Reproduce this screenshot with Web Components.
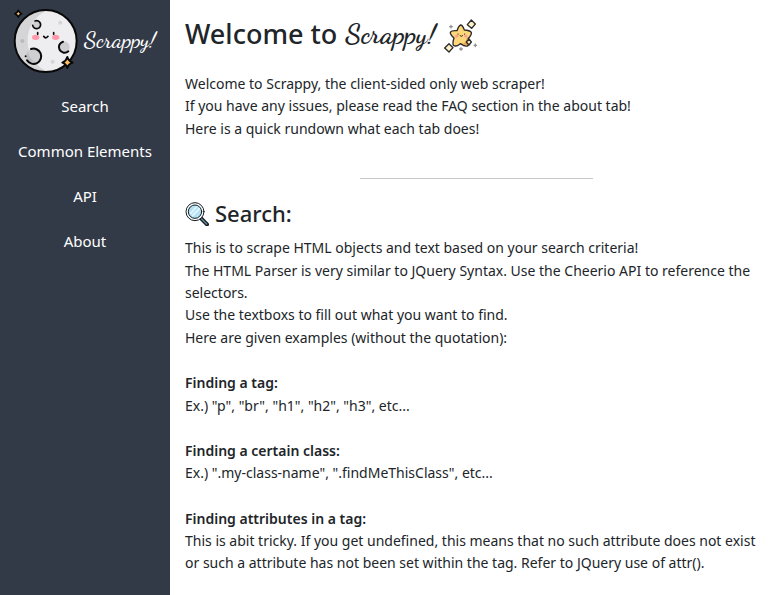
<!DOCTYPE html>
<html lang="en">
<head>
<meta charset="utf-8">
<title>Scrappy!</title>
<style>
  body { margin: 0; background: #fff; color: #212529; font: 14px/1.6 "Noto Sans", "Open Sans", sans-serif; }
</style>
</head>
<body>
<scrappy-app>
  <scrappy-sidebar slot="side"></scrappy-sidebar>
  <page-title>Welcome to</page-title>
  <text-block>
    Welcome to Scrappy, the client-sided only web scraper!<br>
    If you have any issues, please read the FAQ section in the about tab!<br>
    Here is a quick rundown what each tab does!
  </text-block>
  <section-rule></section-rule>
  <section-title>Search:</section-title>
  <text-block>
    This is to scrape HTML objects and text based on your search criteria!<br>
    The HTML Parser is very similar to JQuery Syntax. Use the Cheerio API to reference the selectors.<br>
    Use the textboxs to fill out what you want to find.<br>
    Here are given examples (without the quotation):
  </text-block>
  <text-block><span slot="heading">Finding a tag:</span>Ex.) "p", "br", "h1", "h2", "h3", etc...</text-block>
  <text-block><span slot="heading">Finding a certain class:</span>Ex.) ".my-class-name", ".findMeThisClass", etc...</text-block>
  <text-block><span slot="heading">Finding attributes in a tag:</span>This is abit tricky. If you get undefined, this means that no such attribute does not exist or such a attribute has not been set within the tag. Refer to JQuery use of attr().</text-block>
</scrappy-app>

<script>
const define = (name, html) => customElements.define(name, class extends HTMLElement {
  constructor() {
    super();
    this.attachShadow({ mode: "open" }).innerHTML = html;
  }
});

define("scrappy-app", `
  <style>
    :host { display: grid; grid-template-columns: 170px minmax(0, 1fr); min-height: 100vh; }
    main { padding: 12px 15px 0; }
  </style>
  <slot name="side"></slot>
  <main><slot></slot></main>`);

define("script-name", `
  <style>
    :host { display: inline-block; font-family: "Dancing Script", "Liberation Serif", serif; }
  </style>
  <slot></slot>`);

define("moon-icon", `
  <style>:host { display: block; flex: none; } svg { display: block; }</style>
  <svg width="66" height="66" viewBox="40 24 198 198" fill="none" stroke-linecap="round" aria-hidden="true">
    <circle cx="138" cy="123" r="93" fill="#eeedef"/>
    <path d="M143 30A93 93 0 0 0 45 123A93 93 0 0 0 143 216C101 194 84 161 84 123S101 51 143 30Z" fill="#d5d5d8"/>
    <circle cx="138" cy="123" r="93" stroke="#080808" stroke-width="6"/>
    <circle cx="182" cy="68" r="6" fill="#d5d5d8"/>
    <circle cx="68" cy="123" r="6" fill="#b9babd"/>
    <circle cx="159" cy="185" r="6" fill="#d5d5d8"/>
    <circle cx="102" cy="168" r="22" fill="#bcbdc0"/>
    <path d="M84 150C86 169 96 182 112 188A24 24 0 0 0 118 153Z" fill="#cfcfd2"/>
    <path d="M94 147A23 23 0 1 1 82 181M78 169V169" stroke="#080808" stroke-width="6"/>
    <circle cx="193" cy="141" r="17" fill="#cfcfd2"/>
    <path d="M190 125A17 17 0 1 0 206 154" stroke="#080808" stroke-width="6"/>
    <circle cx="111" cy="73" r="11" fill="#cfcfd2"/>
    <path d="M106 63A12 12 0 1 1 99 76" stroke="#080808" stroke-width="5"/>
    <ellipse cx="108" cy="112" rx="11" ry="8" fill="#ff99ac"/>
    <ellipse cx="168" cy="112" rx="11" ry="8" fill="#ff99ac"/>
    <path d="M114 98V103M162 98V103M132 109Q138 118 145 109" stroke="#080808" stroke-width="5"/>
    <path d="M56 31Q58 38 66 41Q58 44 56 51Q53 44 46 41Q53 38 56 31Z" fill="#ffc365" stroke="#080808" stroke-width="5" stroke-linejoin="round"/>
    <path d="M203 171Q206 183 219 188Q206 192 203 204Q200 192 188 188Q200 183 203 171Z" fill="#ffc365" stroke="#080808" stroke-width="6" stroke-linejoin="round"/>
  </svg>`);

define("star-icon", `
  <style>:host { display: block; flex: none; padding-top: 3px; } svg { display: block; }</style>
  <svg width="34" height="34" viewBox="9 8 102 102" stroke-linecap="round" stroke-linejoin="round" aria-hidden="true">
    <path d="M59 26C63 26 66 30 70 41Q86 42 91 48Q93 55 81 67Q85 84 81 88Q74 93 58 82Q45 93 37 87Q34 80 39 65Q27 54 28 48Q31 42 48 43Q53 28 59 26Z" fill="#fdd779" stroke="#2b2b2b" stroke-width="4"/>
    <path d="M80 68Q84 82 79 86Q73 89 61 81Q74 82 76 67Z" fill="#eda952"/>
    <ellipse cx="47" cy="60" rx="5" ry="4" fill="#ff9b96"/>
    <ellipse cx="75" cy="60" rx="5" ry="4" fill="#ff9b96"/>
    <path d="M51 53V54M71 53V54M57 58Q61 63 65 58" fill="none" stroke="#2b2b2b" stroke-width="3"/>
    <path d="M91 11L103 23L92 36L79 25Z M24 82L36 94L24 107L11 95Z M84 68L91 77L84 86L76 77Z" fill="#fff0c5" stroke="#2b2b2b" stroke-width="4"/>
    <path d="M30 27V35M26 31H34M60 94V102M56 98H64M103 83V91M99 87H107" stroke="#929292" stroke-width="4"/>
  </svg>`);

define("search-icon", `
  <style>:host { display: block; flex: none; padding-top: 2px; } svg { display: block; }</style>
  <svg width="24" height="24" viewBox="0 0 72 72" fill="none" stroke-linecap="round" aria-hidden="true">
    <path d="M49 50L66 67" stroke="#171c20" stroke-width="12"/>
    <path d="M50 51L65 66" stroke="#668ba0" stroke-width="4"/>
    <circle cx="30" cy="29" r="27" fill="#f7fbfd" stroke="#171c20" stroke-width="3"/>
    <circle cx="30" cy="29" r="20" fill="#b3e2f5" stroke="#171c20" stroke-width="3"/>
    <path d="M17 34L34 15M23 41L43 20" stroke="#e5f7fd" stroke-width="5"/>
  </svg>`);

define("nav-item", `
  <style>
    :host { display: block; }
    a { display: block; padding: 10px 0 11px; color: #fff; text-decoration: none; text-align: center; font-size: 15px; line-height: 24px; }
  </style>
  <a href="#"><slot></slot></a>`);

define("scrappy-sidebar", `
  <style>
    :host { display: block; background: #333a47; color: #fff; }
    header { display: flex; align-items: center; gap: 5px; padding: 8px 0 10px 13px; }
    script-name { font-size: 23px; line-height: 36px; font-weight: 500; padding-bottom: 2px; }
  </style>
  <header><moon-icon></moon-icon><script-name>Scrappy!</script-name></header>
  <nav>
    <nav-item>Search</nav-item>
    <nav-item>Common Elements</nav-item>
    <nav-item>API</nav-item>
    <nav-item>About</nav-item>
  </nav>`);

define("page-title", `
  <style>
    :host { display: block; margin-bottom: 17px; }
    h1 { display: flex; align-items: center; gap: 8px; margin: 0; font: 500 27px/44px "Noto Sans", sans-serif; }
    script-name { font-size: 28px; font-weight: 700; }
  </style>
  <h1><slot></slot><script-name>Scrappy!</script-name><star-icon></star-icon></h1>`);

define("section-title", `
  <style>
    :host { display: block; }
    h2 { display: flex; align-items: center; gap: 6px; margin: 0 0 8px; font: 500 22px/32px "Noto Sans", sans-serif; }
  </style>
  <h2><search-icon></search-icon><slot></slot></h2>`);

define("section-rule", `
  <style>
    :host { display: block; }
    hr { width: 40%; height: 1px; margin: 38px auto 18px; border: 0; background: #c8c8c8; }
  </style>
  <hr>`);

define("text-block", `
  <style>
    :host { display: block; margin-bottom: 23px; }
    h3 { margin: 0; font-size: inherit; font-weight: 600; }
    p { margin: 0; }
  </style>
  <h3><slot name="heading"></slot></h3>
  <p><slot></slot></p>`);
</script>
</body>
</html>
